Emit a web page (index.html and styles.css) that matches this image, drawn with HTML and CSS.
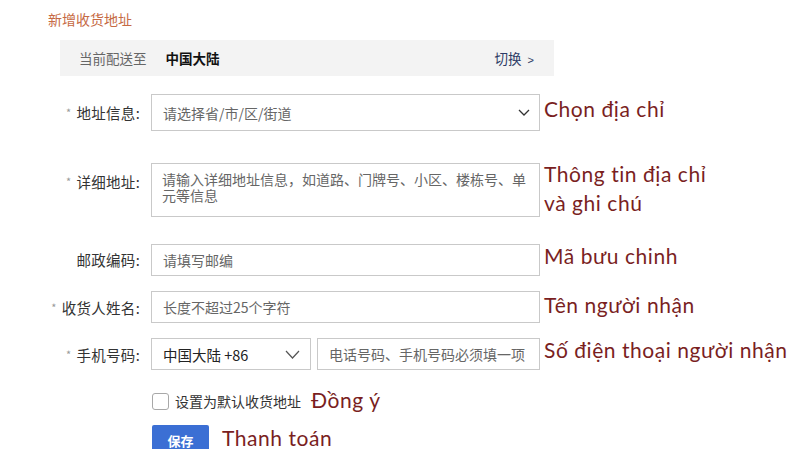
FILE: index.html
```html
<!DOCTYPE html>
<html lang="zh">
<head>
<meta charset="utf-8">
<title>新增收货地址</title>
<link rel="stylesheet" href="styles.css">
</head>
<body>
<div class="page">
  <div class="title">新增收货地址</div>
  <div class="bar">
    <span class="bar-label">当前配送至</span>
    <span class="bar-region">中国大陆</span>
    <span class="bar-switch">切换 <span class="gt">&gt;</span></span>
  </div>

  <div class="form">
    <div class="row row-addr">
      <div class="label"><span class="star">*</span>地址信息:</div>
      <div class="field select tall">
        <span class="ph">请选择省/市/区/街道</span>
        <svg class="chev small" viewBox="0 0 12 7" width="12" height="7"><path d="M1 1 L6 6 L11 1" fill="none" stroke="#333" stroke-width="1.3"/></svg>
      </div>
      <div class="note">Chọn địa chỉ</div>
    </div>

    <div class="row row-detail">
      <div class="label"><span class="star">*</span>详细地址:</div>
      <div class="field area">
        <span class="ph">请输入详细地址信息，如道路、门牌号、小区、楼栋号、单元等信息</span>
      </div>
      <div class="note">Thông tin địa chỉ<br>và ghi chú</div>
    </div>

    <div class="row row-zip">
      <div class="label">邮政编码:</div>
      <div class="field input"><span class="ph">请填写邮编</span></div>
      <div class="note">Mã bưu chinh</div>
    </div>

    <div class="row row-name">
      <div class="label"><span class="star">*</span>收货人姓名:</div>
      <div class="field input"><span class="ph">长度不超过25个字符</span></div>
      <div class="note">Tên người nhận</div>
    </div>

    <div class="row row-phone">
      <div class="label"><span class="star">*</span>手机号码:</div>
      <div class="phone">
        <div class="field select code">
          <span class="val">中国大陆 +86</span>
          <svg class="chev big" viewBox="0 0 15 9" width="15" height="9"><path d="M1 1 L7.5 8 L14 1" fill="none" stroke="#555" stroke-width="1.2"/></svg>
        </div>
        <div class="field input tel"><span class="ph">电话号码、手机号码必须填一项</span></div>
      </div>
      <div class="note">Số điện thoại người nhận</div>
    </div>

    <div class="row row-check">
      <div class="label"></div>
      <div class="check-wrap">
        <span class="box"></span>
        <span class="check-text">设置为默认收货地址</span>
        <span class="note inline">Đồng ý</span>
      </div>
    </div>

    <div class="row row-save">
      <div class="label"></div>
      <div class="save-wrap">
        <button class="save">保存</button>
        <span class="note inline">Thanh toán</span>
      </div>
    </div>
  </div>
</div>
</body>
</html>
```

FILE: styles.css
```css
* { box-sizing: border-box; }
html, body { margin: 0; padding: 0; background: #fff; }
body {
  font-family: "Noto Sans CJK SC", "Noto Sans", sans-serif;
  color: #333;
  width: 800px;
  height: 450px;
  overflow: hidden;
}
.page { padding: 10px 0 0 0; }
.title {
  margin-left: 48px;
  font-size: 14px;
  line-height: 18px;
  color: #c66a44;
}
.bar {
  margin: 12px 0 0 60px;
  width: 494px;
  height: 36px;
  background: #f3f3f3;
  display: flex;
  align-items: center;
  padding: 0 20px 0 19px;
  font-size: 13.5px;
}
.bar-label { color: #666; }
.bar-region { color: #111; font-weight: bold; margin-left: 19px; }
.bar-switch { margin-left: auto; color: #2d3b66; }
.bar-switch .gt { font-size: 11px; margin-left: 3px; font-family: "Liberation Sans", sans-serif; }

.form { margin-top: 18px; }
.row { display: flex; align-items: flex-start; }
.label {
  width: 141px;
  flex: none;
  text-align: right;
  padding-right: 1px;
  font-size: 14.5px;
  color: #333;
  line-height: 18px;
  letter-spacing: 0.3px;
}
.star { color: #999; font-size: 11px; vertical-align: 2px; margin-right: 5px; }
.field {
  border: 1px solid #c9c9c9;
  background: #fff;
  font-size: 14px;
  color: #666;
  display: flex;
  align-items: center;
}
.row > .field, .phone { margin-left: 10px; width: 389px; flex: none; }
.ph { color: #666; }
.select { justify-content: space-between; padding: 0 10px 0 11px; }
.tall { height: 37px; }
.chev.small { margin-right: -1px; }
.area { height: 54px; align-items: flex-start; padding: 7px 10px 0 10px; line-height: 16px; }
.input { height: 32px; padding: 0 11px; }
.note {
  font-family: "Lato", "Open Sans", sans-serif;
  color: #7a1f1f;
  font-size: 21px;
  letter-spacing: 0.55px;
  margin-left: 4px;
  line-height: 29px;
}

.row-addr { margin-top: 0; }
.row-addr .label { padding-top: 9px; }
.row-addr .note { margin-top: 0; }

.row-detail { margin-top: 32px; }
.row-detail .label { padding-top: 9px; }
.row-detail .note { margin-top: -4px; }

.row-zip { margin-top: 27px; }
.row-zip .label, .row-name .label, .row-phone .label { padding-top: 7px; }
.row-zip .note { margin-top: -3px; }
.row-name .note { margin-top: -1px; }
.row-phone .note { margin-top: -3px; }

.row-name { margin-top: 15px; }
.row-phone { margin-top: 15px; }

.phone { display: flex; gap: 6px; }
.code { width: 160px; color: #222; padding: 0 10px 0 11px; height: 32px; font-size: 14.5px; }
.code .val { color: #222; }
.tel { flex: 1; }

.row-check { margin-top: 22px; align-items: center; }
.check-wrap { margin-left: 10px; display: flex; align-items: center; height: 18px; }
.box {
  width: 17px; height: 17px;
  border: 1px solid #a8a8a8;
  border-radius: 3px;
  background: #fff;
  margin-left: 1px;
}
.check-text { font-size: 14px; color: #333; margin-left: 6px; }
.check-wrap .note.inline { margin-left: 10px; line-height: 22px; margin-top: -3px; }

.row-save { margin-top: 15px; }
.save-wrap { margin-left: 11px; display: flex; align-items: flex-start; }
.save {
  width: 57px; height: 24px;
  padding: 7px 0 0 0;
  background: #3b6fd4;
  border: none;
  border-radius: 2px 2px 0 0;
  color: #fff;
  font-family: "Noto Sans CJK SC", sans-serif;
  font-weight: bold;
  font-size: 13px;
  line-height: 16px;
}
.save-wrap .note.inline { margin-left: 13px; line-height: 20px; margin-top: 3px; }
```
